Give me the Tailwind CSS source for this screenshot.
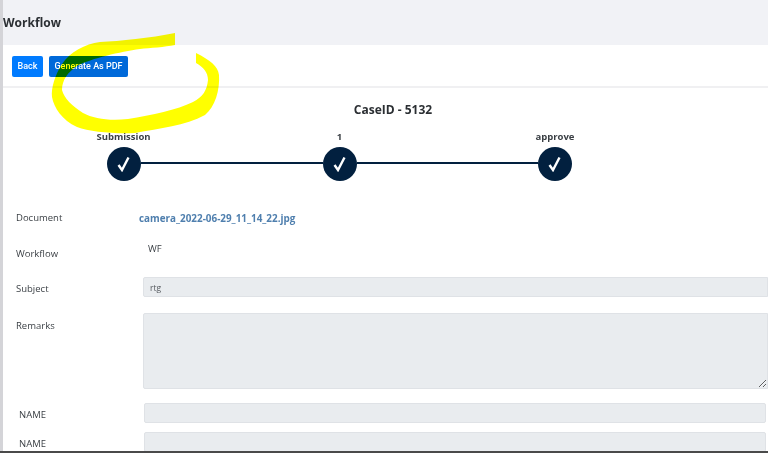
<!DOCTYPE html>
<html lang="en">
<head>
  <meta charset="UTF-8">
  <meta name="viewport" content="width=device-width, initial-scale=1.0">
  <title>Workflow</title>
  <script src="https://cdn.jsdelivr.net/npm/@tailwindcss/browser@4"></script>
</head>
<body class="relative h-[453px] w-[768px] overflow-hidden bg-white font-['Open_Sans',sans-serif] text-[#3a3f44]">
  <div class="flex h-[451px] overflow-hidden">
    <div class="w-[3px] shrink-0 bg-[#d4d4d8]"></div>
    <div class="min-w-0 flex-1">
      <!-- page title -->
      <div class="flex h-[45px] items-center bg-[#f1f2f6] pt-[1px]">
        <h1 class="text-[12px] font-bold text-[#2b2f33]">Workflow</h1>
      </div>

      <!-- toolbar -->
      <div class="flex h-[43px] items-start gap-[6px] border-b-2 border-[#f0f0f2] pt-[11px] pl-[9px]">
        <button class="h-[21px] w-[31px] rounded-[2px] bg-[#007bff] font-['Roboto',sans-serif] text-[9px] font-medium text-white">Back</button>
        <button class="h-[21px] w-[79px] rounded-[2px] bg-[#0069d9] font-['Roboto',sans-serif] text-[9px] font-medium text-white">Generate As PDF</button>
      </div>

      <h2 class="mt-[13px] pl-[15px] text-center text-[12px] leading-[18px] font-bold text-[#2b2f33]">CaseID - 5132</h2>

      <!-- steps -->
      <div class="mt-[11px] ml-[77px] flex w-[518px] items-start justify-between">
        <div class="flex w-[87px] flex-col items-center">
          <span class="text-[9.5px] leading-[14px] font-bold">Submission</span>
          <span class="mt-[3px] flex h-[34px] w-[34px] items-center justify-center rounded-full bg-[#02203f]">
            <svg class="h-[16px] w-[16px]" viewBox="0 0 16 16" fill="none" stroke="#fff" stroke-width="2.4"><path d="M2.5 9l3.5 5 6.5-12.5"/></svg>
          </span>
        </div>
        <div class="z-0 mt-[32px] -mx-[26px] h-[2px] flex-1 bg-[#02203f]"></div>
        <div class="z-10 flex w-[86px] flex-col items-center">
          <span class="text-[9.5px] leading-[14px] font-bold">1</span>
          <span class="mt-[3px] flex h-[34px] w-[34px] items-center justify-center rounded-full bg-[#02203f]">
            <svg class="h-[16px] w-[16px]" viewBox="0 0 16 16" fill="none" stroke="#fff" stroke-width="2.4"><path d="M2.5 9l3.5 5 6.5-12.5"/></svg>
          </span>
        </div>
        <div class="z-0 mt-[32px] -mx-[26px] h-[2px] flex-1 bg-[#02203f]"></div>
        <div class="z-10 flex w-[86px] flex-col items-center">
          <span class="text-[9.5px] leading-[14px] font-bold">approve</span>
          <span class="mt-[3px] flex h-[34px] w-[34px] items-center justify-center rounded-full bg-[#02203f]">
            <svg class="h-[16px] w-[16px]" viewBox="0 0 16 16" fill="none" stroke="#fff" stroke-width="2.4"><path d="M2.5 9l3.5 5 6.5-12.5"/></svg>
          </span>
        </div>
      </div>

      <!-- form -->
      <div class="mt-[30px] text-[9.5px]">
        <div class="flex h-[14px] items-center pl-[13px]">
          <span class="w-[123px]">Document</span>
          <a class="text-[9.9px] font-bold text-[#4f7fae]">camera_2022-06-29_11_14_22.jpg</a>
        </div>
        <div class="mt-[16px] flex h-[22px] pl-[13px]">
          <span class="mt-[6px] w-[132px]">Workflow</span>
          <span class="mt-[1px]">WF</span>
        </div>
        <div class="mt-[14px] flex pl-[13px]">
          <label class="mt-[5px] w-[127px]">Subject</label>
          <input class="h-[20px] flex-1 rounded-l-[2px] border border-[#dfe2e6] bg-[#e9ecef] px-[6px] text-[8.5px] text-[#55595e]" value="rtg" disabled>
        </div>
        <div class="mt-[16px] flex pl-[13px]">
          <label class="mt-[6px] w-[127px]">Remarks</label>
          <textarea class="h-[76px] flex-1 rounded-l-[2px] border border-[#dfe2e6] bg-[#e9ecef]" disabled></textarea>
        </div>
        <div class="mt-[14px] flex pr-[2px] pl-[16px]">
          <label class="mt-[5px] w-[125px]">NAME</label>
          <input class="h-[20px] flex-1 rounded-[2px] border border-[#dfe2e6] bg-[#e9ecef]" disabled>
        </div>
        <div class="mt-[9px] flex pr-[2px] pl-[16px]">
          <label class="mt-[5px] w-[125px]">NAME</label>
          <input class="h-[20px] flex-1 rounded-[2px] border border-[#dfe2e6] bg-[#e9ecef]" disabled>
        </div>
      </div>
    </div>
  </div>
  <div class="h-[2px] bg-[#4a4a4a]"></div>

  <!-- yellow marker scribble drawn over the screenshot -->
  <svg class="pointer-events-none absolute top-0 left-0 mix-blend-multiply" width="768" height="453" viewBox="0 0 768 453">
    <path fill="#ffff00" d="M175 33C150 38 120 41 100 42C85 44 70 52 62 64C55 75 51 88 52 97C54 108 62 120 77 127C90 132 115 134 135 133C160 128 185 126 205 115C215 107 220 90 219 75C218 66 210 60 196 53L196 63C203 67 208 72 208 80C207 90 203 97 193 102C177 110 152 115 128 119C110 121 94 119 83 113C72 106 64 98 62 90C62 80 68 72 77 66C92 58 120 52 140 49C150 48 165 47 175 45Z"/>
  </svg>
</body>
</html>
